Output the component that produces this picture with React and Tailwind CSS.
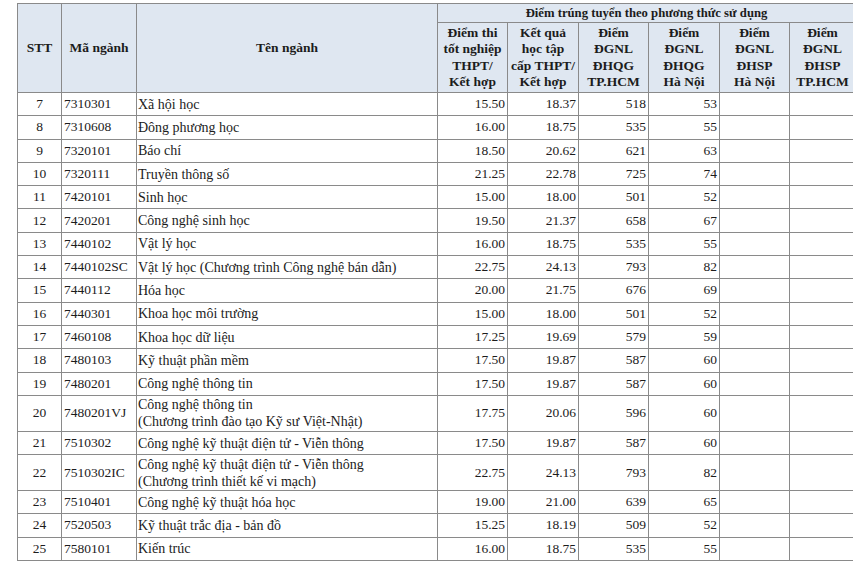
import React from 'react'

const rows = [
  ['7', '7310301', ['Xã hội học'], '15.50', '18.37', '518', '53'],
  ['8', '7310608', ['Đông phương học'], '16.00', '18.75', '535', '55'],
  ['9', '7320101', ['Báo chí'], '18.50', '20.62', '621', '63'],
  ['10', '7320111', ['Truyền thông số'], '21.25', '22.78', '725', '74'],
  ['11', '7420101', ['Sinh học'], '15.00', '18.00', '501', '52'],
  ['12', '7420201', ['Công nghệ sinh học'], '19.50', '21.37', '658', '67'],
  ['13', '7440102', ['Vật lý học'], '16.00', '18.75', '535', '55'],
  ['14', '7440102SC', ['Vật lý học (Chương trình Công nghệ bán dẫn)'], '22.75', '24.13', '793', '82'],
  ['15', '7440112', ['Hóa học'], '20.00', '21.75', '676', '69'],
  ['16', '7440301', ['Khoa học môi trường'], '15.00', '18.00', '501', '52'],
  ['17', '7460108', ['Khoa học dữ liệu'], '17.25', '19.69', '579', '59'],
  ['18', '7480103', ['Kỹ thuật phần mềm'], '17.50', '19.87', '587', '60'],
  ['19', '7480201', ['Công nghệ thông tin'], '17.50', '19.87', '587', '60'],
  ['20', '7480201VJ', ['Công nghệ thông tin', '(Chương trình đào tạo Kỹ sư Việt-Nhật)'], '17.75', '20.06', '596', '60'],
  ['21', '7510302', ['Công nghệ kỹ thuật điện tử - Viễn thông'], '17.50', '19.87', '587', '60'],
  ['22', '7510302IC', ['Công nghệ kỹ thuật điện tử - Viễn thông', '(Chương trình thiết kế vi mạch)'], '22.75', '24.13', '793', '82'],
  ['23', '7510401', ['Công nghệ kỹ thuật hóa học'], '19.00', '21.00', '639', '65'],
  ['24', '7520503', ['Kỹ thuật trắc địa - bản đồ'], '15.25', '18.19', '509', '52'],
  ['25', '7580101', ['Kiến trúc'], '16.00', '18.75', '535', '55'],
]

const subHeads = [
  ['Điểm thi', 'tốt nghiệp', 'THPT/', 'Kết hợp'],
  ['Kết quả', 'học tập', 'cấp THPT/', 'Kết hợp'],
  ['Điểm', 'ĐGNL', 'ĐHQG', 'TP.HCM'],
  ['Điểm', 'ĐGNL', 'ĐHQG', 'Hà Nội'],
  ['Điểm', 'ĐGNL', 'ĐHSP', 'Hà Nội'],
  ['Điểm', 'ĐGNL', 'ĐHSP', 'TP.HCM'],
]

const cell = 'border border-[#8a8a8a] p-0'
const head = 'border border-[#8a8a8a] bg-[#dfe7f1] font-bold text-center p-0'

export default function App() {
  return (
    <div className="w-[853px] h-[572px] overflow-hidden bg-white pt-[3px] pl-[17px] [font-family:'Liberation_Serif',serif] text-[#1c1c1c]">
      <table className="table-fixed border-collapse w-[838px] text-[13.5px]">
        <colgroup>
          <col className="w-[44px]" />
          <col className="w-[75px]" />
          <col className="w-[301px]" />
          <col className="w-[70px]" />
          <col className="w-[71px]" />
          <col className="w-[70px]" />
          <col className="w-[71px]" />
          <col className="w-[70px]" />
          <col className="w-[66px]" />
        </colgroup>
        <thead>
          <tr className="h-[19px]">
            <th rowSpan={2} className={head + ' text-[13.5px]'}>STT</th>
            <th rowSpan={2} className={head + ' text-[13.5px]'}>Mã ngành</th>
            <th rowSpan={2} className={head + ' text-[13.5px]'}>Tên ngành</th>
            <th colSpan={6} className={head + ' text-[12.7px] leading-[17px]'}>Điểm trúng tuyển theo phương thức sử dụng</th>
          </tr>
          <tr className="h-[70px]">
            {subHeads.map((lines, i) => (
              <th key={i} className={head + ' text-[13.5px] leading-[16.5px] align-middle'}>
                {lines.map((l, j) => (
                  <div key={j} className="whitespace-nowrap">{l}</div>
                ))}
              </th>
            ))}
          </tr>
        </thead>
        <tbody>
          {rows.map((r) => (
            <tr key={r[0]} className={r[2].length > 1 ? 'h-[36px]' : 'h-[23.3px]'}>
              <td className={cell + ' text-center'}>{r[0]}</td>
              <td className={cell + ' pl-[2px] whitespace-nowrap'}>{r[1]}</td>
              <td className={cell + ' pl-[1px] text-[14px] leading-[17px]'}>
                {r[2].map((l, j) => (
                  <div key={j} className="whitespace-nowrap">{l}</div>
                ))}
              </td>
              <td className={cell + ' text-right pr-[2px]'}>{r[3]}</td>
              <td className={cell + ' text-right pr-[2px]'}>{r[4]}</td>
              <td className={cell + ' text-right pr-[2px]'}>{r[5]}</td>
              <td className={cell + ' text-right pr-[2px]'}>{r[6]}</td>
              <td className={cell}></td>
              <td className={cell}></td>
            </tr>
          ))}
        </tbody>
      </table>
    </div>
  )
}
